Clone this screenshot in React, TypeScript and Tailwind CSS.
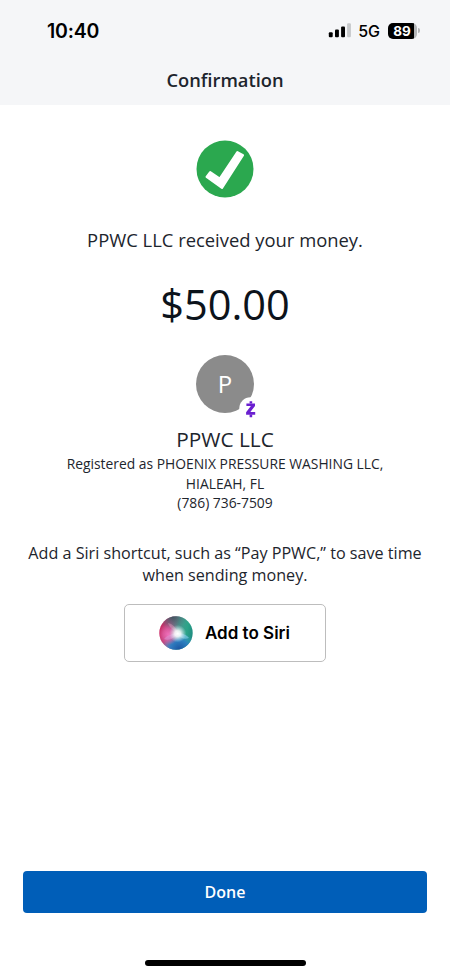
function StatusBar() {
  return (
    <div className="flex h-[60px] items-center justify-between pl-[47px] pr-[30px] pt-px font-['Inter',sans-serif] text-black">
      <span className="text-[19.5px] font-semibold leading-6 tracking-[-0.2px]">
        10:40
      </span>
      <div className="flex items-center">
        <svg width="23" height="15" viewBox="0 0 23 15">
          <rect x="0.8" y="9.3" width="3.9" height="5" rx="1" />
          <rect x="7" y="6.5" width="3.9" height="7.8" rx="1" />
          <rect x="13.1" y="3.4" width="3.9" height="10.9" rx="1" />
          <rect x="19.1" y="0.2" width="3.8" height="14.1" rx="1" fill="#c6c8ca" />
        </svg>
        <span className="ml-[7px] text-[16px] font-medium leading-5">5G</span>
        <div className="ml-[8px] flex items-center">
          <div className="flex h-4 w-[29px] items-center justify-center rounded-[5px] bg-linear-to-r from-black from-90% to-[#b4b6b8] to-90% text-[13.5px] font-bold leading-4 text-white">
            <span className="-ml-px">89</span>
          </div>
          <div className="ml-px h-[5px] w-[2px] rounded-r-full bg-[#b4b6b8]" />
        </div>
      </div>
    </div>
  );
}

function SuccessIcon() {
  return (
    <svg width="58" height="58" viewBox="0 0 58 58">
      <circle cx="29" cy="29" r="28.5" fill="#2ba84f" />
      <path
        d="M10.6 36.9L14.2 32.1L23.8 38.6L41.4 12.2L47 15.2L26 47.9Z"
        fill="#fff"
        stroke="#fff"
        strokeWidth="2.2"
        strokeLinejoin="round"
      />
    </svg>
  );
}

function Avatar() {
  return (
    <div className="relative flex size-[58px] items-center justify-center rounded-full bg-[#8b8b8b] text-[24px] leading-none text-white">
      <span>P</span>
      <svg
        className="absolute left-[43px] top-[42px]"
        width="23"
        height="23"
        viewBox="0 0 23 23"
      >
        <circle cx="11.5" cy="11.5" r="11.2" fill="#fff" />
        <path
          d="M7.4 6.4H16V8.9L11.3 15.1H16.2V17.7H7.1V15.2L11.9 9H7.4Z"
          fill="#6a1fd0"
        />
        <path d="M11.9 4.2V6.6M11.9 17.5V20.2" stroke="#6a1fd0" strokeWidth="2.6" />
      </svg>
    </div>
  );
}

function SiriIcon() {
  return (
    <svg width="34" height="34" viewBox="0 0 34 34">
      <defs>
        <linearGradient id="orb" x1="0" y1="0.4" x2="1" y2="0.6">
          <stop offset="0" stopColor="#c8235c" />
          <stop offset="0.3" stopColor="#b0588c" />
          <stop offset="0.52" stopColor="#4f9690" />
          <stop offset="0.8" stopColor="#2ba488" />
          <stop offset="1" stopColor="#1f8a80" />
        </linearGradient>
        <radialGradient id="orbBlue" cx="0.6" cy="1" r="0.52">
          <stop offset="0" stopColor="#1b529f" />
          <stop offset="0.55" stopColor="#2c7cc6" stopOpacity="0.9" />
          <stop offset="1" stopColor="#3aa2d8" stopOpacity="0" />
        </radialGradient>
        <radialGradient id="orbTop" cx="0.4" cy="0" r="0.42">
          <stop offset="0" stopColor="#38555d" />
          <stop offset="1" stopColor="#4b6f74" stopOpacity="0" />
        </radialGradient>
        <radialGradient id="orbPink" cx="0.27" cy="0.54" r="0.32">
          <stop offset="0" stopColor="#f06fba" />
          <stop offset="0.5" stopColor="#e860a8" stopOpacity="0.7" />
          <stop offset="1" stopColor="#e0559c" stopOpacity="0" />
        </radialGradient>
        <radialGradient id="orbGlow" cx="0.55" cy="0.52" r="0.26">
          <stop offset="0" stopColor="#fff" />
          <stop offset="0.35" stopColor="#fff" stopOpacity="0.85" />
          <stop offset="1" stopColor="#cfeaf5" stopOpacity="0" />
        </radialGradient>
      </defs>
      <circle cx="17" cy="17" r="16.7" fill="url(#orb)" />
      <circle cx="17" cy="17" r="16.7" fill="url(#orbTop)" />
      <circle cx="17" cy="17" r="16.7" fill="url(#orbBlue)" />
      <circle cx="17" cy="17" r="16.7" fill="url(#orbPink)" />
      <path d="M5 23C8 19 13 18 19 17C16 22 10 25 5 23Z" fill="#d9a9e6" opacity="0.4" />
      <path d="M18 17C23 17 28 19 30 22C25 24 21 22 18 17Z" fill="#8fd4f2" opacity="0.55" />
      <path d="M19 17C14 14 10 11 9 7C14 8 17 12 19 17Z" fill="#e3b4c8" opacity="0.35" />
      <circle cx="17" cy="17" r="16.7" fill="url(#orbGlow)" />
    </svg>
  );
}

export default function App() {
  return (
    <div className="flex h-[975px] w-[450px] flex-col bg-white font-['Open_Sans',sans-serif] text-[#1d252d]">
      <header className="h-[105px] bg-[#f5f6f8]">
        <StatusBar />
        <h1 className="mt-[7px] text-center text-[18.3px] font-semibold leading-[26px]">
          Confirmation
        </h1>
      </header>

      <main className="flex grow flex-col items-center whitespace-nowrap pt-[35px] text-center">
        <SuccessIcon />
        <p className="mt-[29px] text-[18.4px] leading-[26px]">
          PPWC LLC received your money.
        </p>
        <p className="mt-[21px] text-[41.5px] leading-[60px] text-[#0c131b]">$50.00</p>
        <div className="mt-[21px]">
          <Avatar />
        </div>
        <h2 className="mt-[13px] text-[20.8px] leading-[26px]">PPWC LLC</h2>
        <p className="mt-[2px] text-[13.85px] leading-[19.5px]">
          Registered as PHOENIX PRESSURE WASHING LLC,
          <br />
          HIALEAH, FL
          <br />
          (786) 736-7509
        </p>
        <p className="mt-[29px] text-[16.15px] leading-[22px]">
          Add a Siri shortcut, such as “Pay PPWC,” to save time
          <br />
          when sending money.
        </p>
        <button className="mt-[18px] flex h-[58px] w-[202px] items-center rounded-[5px] border-[1.5px] border-[#bdbdbd] pl-[34px] font-['Inter',sans-serif] text-[17px] font-semibold text-black">
          <SiriIcon />
          <span className="ml-[12px] mt-[2px]">Add to Siri</span>
        </button>
      </main>

      <footer className="flex h-[104px] flex-col items-center">
        <button className="h-[42px] w-[404px] rounded-[4px] bg-[#005eb8] text-[16px] font-semibold text-white">
          Done
        </button>
        <div className="mt-[47px] h-[6px] w-[161px] rounded-full bg-black" />
      </footer>
    </div>
  );
}
